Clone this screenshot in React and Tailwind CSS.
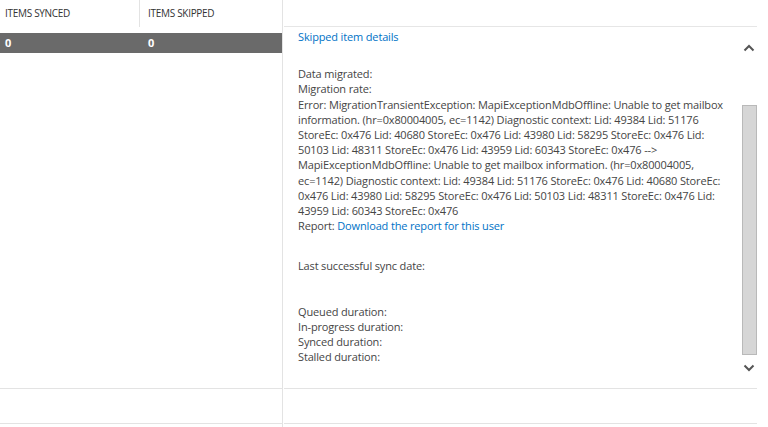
import React from "react";

const errorText =
  "Error: MigrationTransientException: MapiExceptionMdbOffline: Unable to get mailbox information. (hr=0x80004005, ec=1142) Diagnostic context: Lid: 49384 Lid: 51176 StoreEc: 0x476 Lid: 40680 StoreEc: 0x476 Lid: 43980 Lid: 58295 StoreEc: 0x476 Lid: 50103 Lid: 48311 StoreEc: 0x476 Lid: 43959 Lid: 60343 StoreEc: 0x476 --> MapiExceptionMdbOffline: Unable to get mailbox information. (hr=0x80004005, ec=1142) Diagnostic context: Lid: 49384 Lid: 51176 StoreEc: 0x476 Lid: 40680 StoreEc: 0x476 Lid: 43980 Lid: 58295 StoreEc: 0x476 Lid: 50103 Lid: 48311 StoreEc: 0x476 Lid: 43959 Lid: 60343 StoreEc: 0x476";

function Chevron({ up }) {
  return (
    <svg width="12" height="8" viewBox="0 0 12 8" className="block">
      <polyline
        points={up ? "1.5,6.5 6,2 10.5,6.5" : "1.5,1.5 6,6 10.5,1.5"}
        fill="none"
        stroke="#555"
        strokeWidth="2"
      />
    </svg>
  );
}

export default function App() {
  return (
    <div className="flex h-[427px] w-[768px] overflow-hidden bg-white font-['Open_Sans',sans-serif] text-[#454545]">
      {/* users list */}
      <div className="flex w-[283px] shrink-0 flex-col border-r border-[#e3e3e3]">
        <div className="flex h-[27px] text-[10px] uppercase tracking-[-0.3px] text-[#333]">
          <div className="flex w-[140px] items-center border-r border-[#e3e3e3] pl-[5px]">
            Items synced
          </div>
          <div className="flex items-center pl-[8px]">Items skipped</div>
        </div>
        <div className="mt-[6px] flex h-[20px] items-center bg-[#6a6a6a] text-[11px] font-bold text-white">
          <div className="w-[140px] pl-[5px]">0</div>
          <div className="pl-[8px]">0</div>
        </div>
        <div className="flex-1" />
        <div className="h-[36px] border-y border-[#e3e3e3]" />
        <div className="h-[3px]" />
      </div>

      {/* details pane */}
      <div className="flex flex-1 flex-col pl-[1px] pr-[11px]">
        <div className="h-[27px] shrink-0 border-b border-[#e6e6e6]" />
        <div className="flex flex-1 overflow-hidden">
          <div className="flex-1 pl-[14px] pr-[8px] text-[11px] leading-[15.2px] tracking-[-0.15px]">
            <div className="pt-[2px] text-[#0072c6]">Skipped item details</div>
            <div className="mt-[22px]">
              <div>Data migrated:</div>
              <div>Migration rate:</div>
              <div>{errorText}</div>
              <div>
                Report: <span className="text-[#0072c6]">Download the report for this user</span>
              </div>
            </div>
            <div className="mt-[25px]">Last successful sync date:</div>
            <div className="mt-[30px]">
              <div>Queued duration:</div>
              <div>In-progress duration:</div>
              <div>Synced duration:</div>
              <div>Stalled duration:</div>
            </div>
          </div>
          <div className="flex w-[16px] shrink-0 flex-col items-center pt-[17px]">
            <Chevron up />
            <div className="mt-[53px] h-[250px] w-[15px] border border-[#b9b9b9] bg-[#d6d6d6]" />
            <div className="mt-[9px]">
              <Chevron />
            </div>
          </div>
        </div>
        <div className="h-[36px] shrink-0 border-y border-[#e3e3e3]" />
        <div className="h-[3px] shrink-0" />
      </div>
    </div>
  );
}
